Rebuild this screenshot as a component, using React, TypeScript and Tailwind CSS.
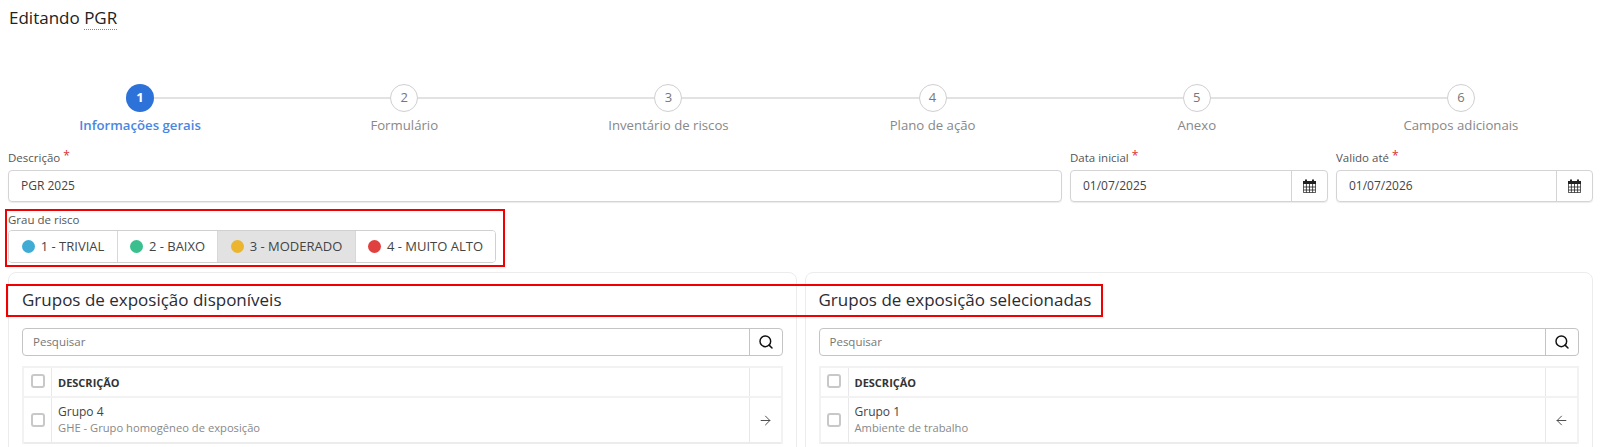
import React from 'react';
import { ArrowLeft, ArrowRight, Search } from 'lucide-react';

const steps = ['Informações gerais', 'Formulário', 'Inventário de riscos', 'Plano de ação', 'Anexo', 'Campos adicionais'];

const riscos = [
  { label: '1 - TRIVIAL', color: 'bg-[#40acd6]', width: 'w-[108px]', active: false },
  { label: '2 - BAIXO', color: 'bg-[#3cbf8f]', width: 'w-[100px]', active: false },
  { label: '3 - MODERADO', color: 'bg-[#ebb52d]', width: 'w-[138px]', active: true },
  { label: '4 - MUITO ALTO', color: 'bg-[#e04040]', width: 'w-[140px]', active: false },
];

const CalendarIcon = () => (
  <svg width="13" height="14" viewBox="0 0 13 14" className="text-[#222]">
    <path fill="currentColor" d="M0 2h2V0.6h2V2h5V0.6h2V2h2v3H0z" />
    <path fill="none" stroke="currentColor" strokeWidth="0.8" d="M0.4 5v8.6h12.2V5M0.4 8h12.2M0.4 11h12.2M3.4 5v8.6M6.5 5v8.6M9.6 5v8.6" />
  </svg>
);

const Label = ({ text, required }: { text: string; required?: boolean }) => (
  <div className="text-[11.5px] leading-[16px] text-[#555] h-[20px]">
    {text}
    {required && <span className="text-[#d93030] text-[12px] ml-[3px] relative -top-[2px]">*</span>}
  </div>
);

const DateField = ({ label, value }: { label: string; value: string }) => (
  <div>
    <Label text={label} required />
    <div className="flex h-[32px] border border-[#d4d4d4] rounded-[4px] shadow-[0_1px_1px_rgba(0,0,0,0.08)] text-[12px] text-[#444]">
      <div className="flex-1 flex items-center pl-[12px]">{value}</div>
      <div className="w-[36px] flex items-center justify-center border-l border-[#d4d4d4]">
        <CalendarIcon />
      </div>
    </div>
  </div>
);

const GroupCard = ({
  title,
  grupo,
  subtitulo,
  icon,
}: {
  title: string;
  grupo: string;
  subtitulo: string;
  icon: React.ReactNode;
}) => (
  <div className="border border-[#ececec] rounded-[8px] px-[13px] h-[300px]">
    <h2 className="text-[17px] leading-[24px] text-[#2b2b33] mt-[15px] mb-[16px]">{title}</h2>
    <div className="flex h-[28px] border border-[#c4c4c4] rounded-[4px] text-[11.5px] text-[#777]">
      <div className="flex-1 flex items-center pl-[10px]">Pesquisar</div>
      <div className="w-[33px] flex items-center justify-center border-l border-[#c4c4c4]">
        <Search size={16} strokeWidth={2.2} className="text-[#111]" />
      </div>
    </div>
    <div className="mt-[10px] border-2 border-b-0 border-[#f2f2f2]">
      <div className="flex h-[30px] border-b-2 border-[#f2f2f2]">
        <div className="w-[28px] border-r border-[#e8e8e8] flex justify-center pt-[6px]">
          <div className="w-[14px] h-[14px] border-2 border-[#c8c8c8] rounded-[3px]" />
        </div>
        <div className="flex-1 flex items-center pl-[6px] pt-[2px] text-[11px] font-bold text-[#333]">DESCRIÇÃO</div>
        <div className="w-[32px] border-l border-[#e8e8e8]" />
      </div>
      <div className="flex h-[46px] border-b-2 border-[#ececec]">
        <div className="w-[28px] border-r border-[#e8e8e8] flex justify-center items-center">
          <div className="w-[14px] h-[14px] border-2 border-[#c8c8c8] rounded-[3px]" />
        </div>
        <div className="flex-1 flex flex-col justify-center pl-[6px]">
          <div className="text-[12px] leading-[17px] text-[#444] -mt-[1px]">{grupo}</div>
          <div className="text-[11.2px] leading-[16px] text-[#888]">{subtitulo}</div>
        </div>
        <div className="w-[32px] border-l border-[#e8e8e8] flex items-center justify-center text-[#444]">{icon}</div>
      </div>
    </div>
  </div>
);

export default function App() {
  return (
    <div className="relative h-[447px] overflow-hidden bg-white font-['Open_Sans',sans-serif]">
      <div className="pl-[8px] pr-[7px]">
        <div className="pt-[7px] pl-[1px] h-[84px] text-[17px] leading-[22px] text-[#222]">
          Editando <span className="border-b border-dotted border-[#888]">PGR</span>
        </div>

        {/* Stepper */}
        <div className="grid grid-cols-6 h-[66px]">
          {steps.map((s, i) => (
            <div key={s} className="relative flex flex-col items-center">
              {i < steps.length - 1 && (
                <div className="absolute left-1/2 top-[13px] w-full h-[2px] bg-[#e2e2e2]" />
              )}
              <div
                className={
                  i === 0
                    ? 'relative w-[28px] h-[28px] rounded-full bg-[#2d72d9] text-white text-[13px] font-bold flex items-center justify-center'
                    : 'relative w-[28px] h-[28px] rounded-full bg-white border border-[#cfcfcf] text-[#777] text-[13px] flex items-center justify-center'
                }
              >
                {i + 1}
              </div>
              <div
                className={
                  i === 0
                    ? 'mt-[3px] text-[13.2px] leading-[20px] font-semibold text-[#4a86e0]'
                    : 'mt-[3px] text-[13.2px] leading-[20px] text-[#888]'
                }
              >
                {s}
              </div>
            </div>
          ))}
        </div>

        {/* Campos */}
        <div className="grid grid-cols-[1054px_258px_257px] gap-[8px]">
          <div>
            <Label text="Descrição" required />
            <div className="flex items-center h-[32px] border border-[#d4d4d4] rounded-[4px] shadow-[0_1px_1px_rgba(0,0,0,0.08)] pl-[12px] text-[12px] text-[#444]">
              PGR 2025
            </div>
          </div>
          <DateField label="Data inicial" value="01/07/2025" />
          <DateField label="Valido até" value="01/07/2026" />
        </div>

        {/* Grau de risco */}
        <div className="mt-[8px]">
          <div className="text-[11.5px] leading-[16px] text-[#555] h-[20px] pt-[2px]">Grau de risco</div>
          <div className="inline-flex h-[33px] border border-[#d0d0d0] rounded-[4px] overflow-hidden text-[13px] text-[#444]">
            {riscos.map((r, i) => (
              <div
                key={r.label}
                className={`${r.width} flex items-center justify-center gap-[6px] ${i > 0 ? 'border-l border-[#d8d8d8]' : ''} ${r.active ? 'bg-[#e2e2e2]' : 'bg-white'}`}
              >
                <span className={`w-[13px] h-[13px] rounded-full ${r.color}`} />
                {r.label}
              </div>
            ))}
          </div>
        </div>

        {/* Grupos */}
        <div className="grid grid-cols-2 gap-[8px] mt-[9px]">
          <GroupCard
            title="Grupos de exposição disponíveis"
            grupo="Grupo 4"
            subtitulo="GHE - Grupo homogêneo de exposição"
            icon={<ArrowRight size={15} strokeWidth={1.5} />}
          />
          <GroupCard
            title="Grupos de exposição selecionadas"
            grupo="Grupo 1"
            subtitulo="Ambiente de trabalho"
            icon={<ArrowLeft size={15} strokeWidth={1.5} />}
          />
        </div>
      </div>

      {/* Marcações em vermelho sobre o print */}
      <div className="absolute left-[5px] top-[209px] w-[500px] h-[58px] border-2 border-[#f00000]" />
      <div className="absolute left-[6px] top-[284px] w-[1097px] h-[33px] border-2 border-[#f00000]" />
    </div>
  );
}
